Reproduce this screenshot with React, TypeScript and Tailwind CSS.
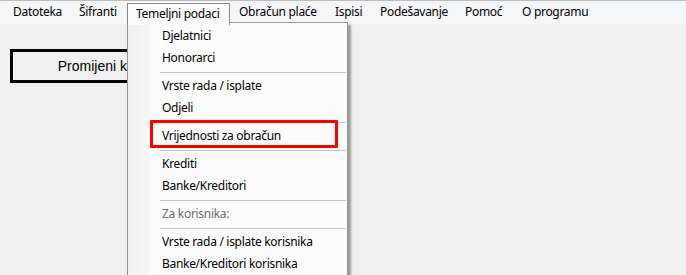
const menuItems = [
  { label: "Datoteka", width: "w-[66px]" },
  { label: "Šifranti", width: "w-[57px]" },
  { label: "Temeljni podaci", width: "w-[103px]", open: true },
  { label: "Obračun plaće", width: "w-[96px]" },
  { label: "Ispisi", width: "w-[45px]" },
  { label: "Podešavanje", width: "w-[85px]" },
  { label: "Pomoć", width: "w-[57px]" },
  { label: "O programu", width: "w-[84px]" },
];

type Entry = { label: string; disabled?: boolean } | "sep";

const entries: Entry[] = [
  { label: "Djelatnici" },
  { label: "Honorarci" },
  "sep",
  { label: "Vrste rada / isplate" },
  { label: "Odjeli" },
  "sep",
  { label: "Vrijednosti za obračun" },
  "sep",
  { label: "Krediti" },
  { label: "Banke/Kreditori" },
  "sep",
  { label: "Za korisnika:", disabled: true },
  "sep",
  { label: "Vrste rada / isplate korisnika" },
  { label: "Banke/Kreditori korisnika" },
];

export default function App() {
  return (
    <div className="relative h-[275px] w-[686px] overflow-hidden bg-[#f0f0f0] font-['Segoe_UI','Noto_Sans',sans-serif] text-[12px] tracking-[-0.3px] text-black">
      <MenuBar />

      <div className="px-[10px] pt-[25px]">
        <button className="h-[34px] w-[213px] border-[3px] border-black bg-[#f0f0f0] font-['Liberation_Sans',Arial,sans-serif] text-[14px] tracking-normal text-black">
          Promijeni korisnika
        </button>
      </div>

      <Dropdown />
    </div>
  );
}

function MenuBar() {
  return (
    <div className="flex h-[24px] border-t border-[#bdbdbd] bg-[#f5f6f7] pl-[4px]">
      {menuItems.map((item) => (
        <div
          key={item.label}
          className={
            item.open
              ? "relative z-20 mt-[2px] flex h-[22px] w-[103px] items-center border border-b-0 border-[#8a8a8a] bg-[#fbfbfb] pl-[8px] pb-[1px]"
              : `flex ${item.width} items-center pl-[9px] pb-[1px]`
          }
        >
          {item.label}
        </div>
      ))}
    </div>
  );
}

function Dropdown() {
  return (
    <div className="absolute left-[127px] top-[22px] z-10 w-[221px] border border-[#979797] bg-[#fcfcfc] shadow-[3px_3px_2px_rgba(0,0,0,0.35)]">
      <div className="flex">
        <div className="w-[22px] shrink-0 bg-gradient-to-r from-[#f1f1f1] to-[#f7f7f7]" />
        <div className="flex-1 pt-[2px] pb-[20px]">
          {entries.map((entry, i) =>
            entry === "sep" ? (
              <div key={i} className="h-[6px] pl-[10px] pr-[1px] pt-[3px]">
                <div className="h-px bg-[#c5c5c5]" />
              </div>
            ) : (
              <div
                key={i}
                className={`flex h-[22px] items-center pl-[12px] ${entry.disabled ? "text-[#6d6d6d]" : "text-black"}`}
              >
                {entry.label}
              </div>
            ),
          )}
        </div>
      </div>

      {/* red highlight drawn over the menu */}
      <div className="absolute left-[22px] top-[97px] h-[28px] w-[188px] rounded-[1px] border-[3px] border-[#ff0000]" />
    </div>
  );
}
